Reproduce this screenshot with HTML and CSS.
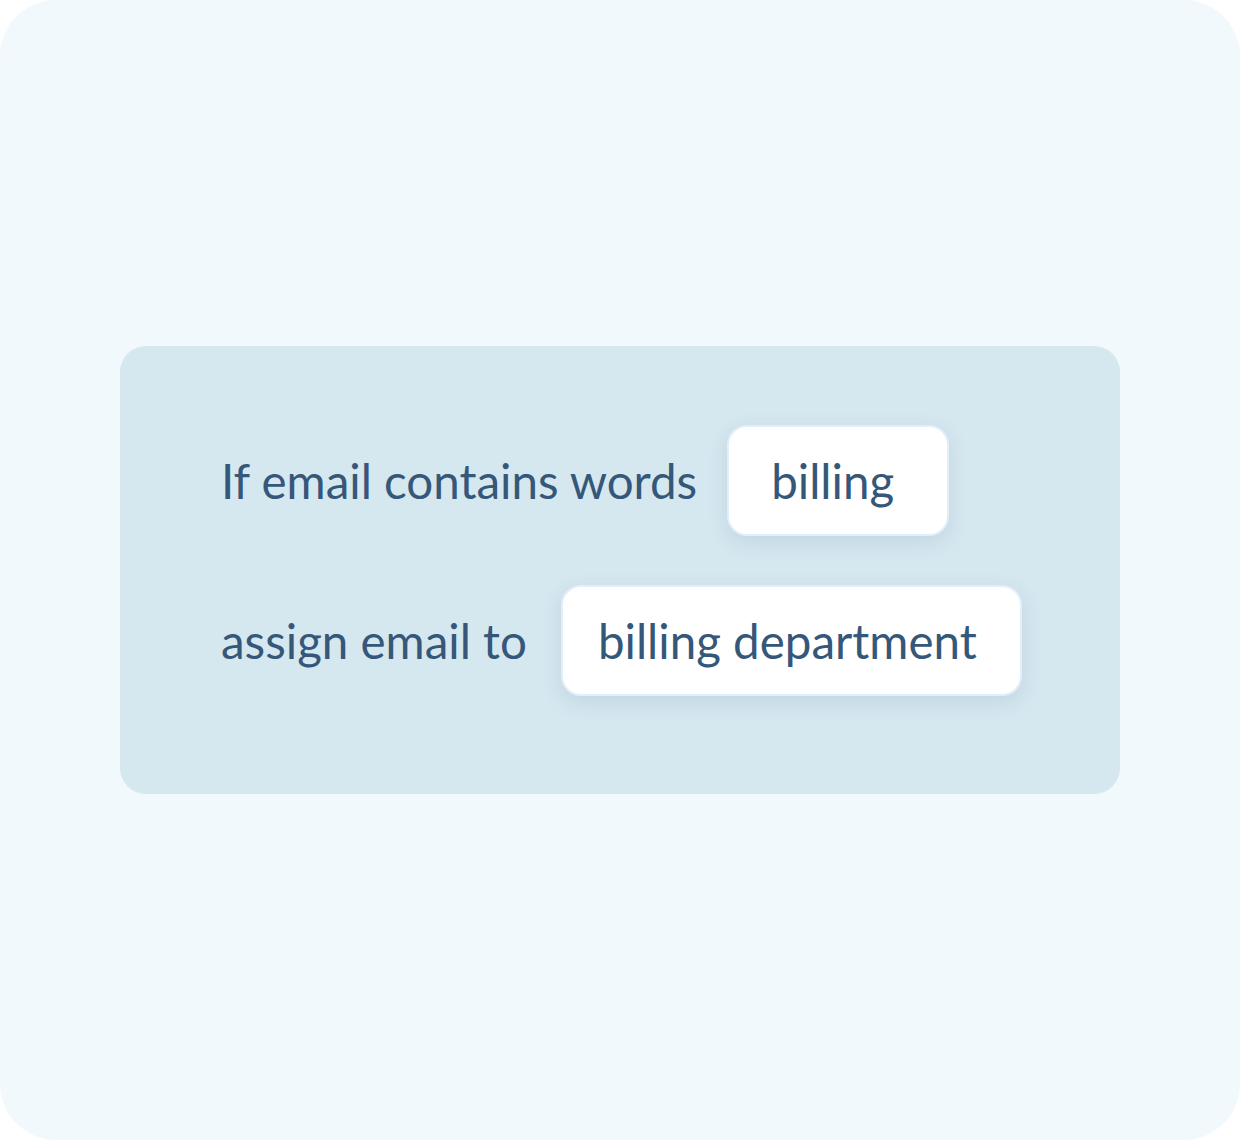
FILE: index.html
```html
<!DOCTYPE html>
<html lang="en">
<head>
<meta charset="utf-8">
<title>Rule</title>
<link rel="stylesheet" href="styles.css">
</head>
<body>
<div class="frame">
  <div class="panel">
    <div class="row row-first">
      <span class="label">If email contains words</span>
      <span class="chip chip-word">billing</span>
    </div>
    <div class="row row-second">
      <span class="label">assign email to</span>
      <span class="chip chip-dept">billing department</span>
    </div>
  </div>
</div>
</body>
</html>
```
FILE: styles.css
```css
html, body {
  margin: 0;
  padding: 0;
  background: #ffffff;
}
.frame {
  width: 1240px;
  height: 1140px;
  box-sizing: border-box;
  background: #f2f9fc;
  border-radius: 56px;
  padding: 346px 120px 0 120px;
}
.panel {
  width: 1000px;
  height: 448px;
  box-sizing: border-box;
  background: #d5e7ef;
  border-radius: 26px;
  padding: 79px 0 0 101px;
  display: flex;
  flex-direction: column;
  gap: 49px;
  font-family: Lato, "Noto Sans", sans-serif;
  color: #35577a;
  font-size: 47.5px;
}
.row {
  display: flex;
  align-items: center;
}
.row-first {
  gap: 30px;
}
.row-second {
  gap: 34px;
}
.label {
  line-height: 1;
}
.chip {
  height: 111px;
  box-sizing: border-box;
  background: #ffffff;
  border: 2px solid #e3eefa;
  border-radius: 20px;
  display: flex;
  align-items: center;
  justify-content: flex-start;
  box-shadow: 0 6px 18px rgba(120, 160, 185, 0.22);
  line-height: 1;
}
.chip-word {
  width: 222px;
  padding-left: 42px;
}
.chip-dept {
  width: 461px;
  padding-left: 35px;
}
```
